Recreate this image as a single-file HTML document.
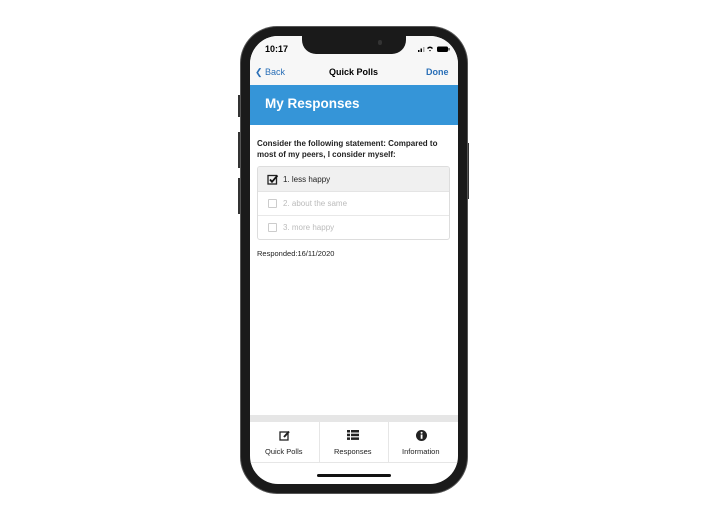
<!DOCTYPE html>
<html><head><style>
*{margin:0;padding:0;box-sizing:border-box}
body{width:708px;height:523px;background:#fff;position:relative;font-family:"Liberation Sans",sans-serif;overflow:hidden}
.a{position:absolute}
.phone{left:241px;top:27px;width:226px;height:466px;background:#1a1a1a;border-radius:36px;box-shadow:0 0 0 1px #555}
.screen{left:250px;top:36px;width:208px;height:448px;background:#fff;border-radius:28px;overflow:hidden}
.notch{left:302px;top:35px;width:104px;height:19px;background:#1a1a1a;border-radius:0 0 14px 14px}
.t{font-size:8px;color:#222}
</style></head><body>
<div class="a" style="left:238px;top:95px;width:4px;height:22px;background:#333"></div>
<div class="a" style="left:238px;top:132px;width:4px;height:36px;background:#333"></div>
<div class="a" style="left:238px;top:178px;width:4px;height:36px;background:#333"></div>
<div class="a" style="left:466px;top:143px;width:3px;height:56px;background:#333"></div>
<div class="a phone"></div>
<div class="a screen">
  <div class="a" style="left:0;top:0;width:208px;height:49px;background:#f7f7f7"></div>
  <div class="a" style="left:15px;top:8px;font-size:9px;font-weight:bold;color:#000">10:17</div>
  <svg class="a" style="left:168px;top:9px" width="32" height="8" viewBox="0 0 32 8"><g fill="#000"><rect x="0" y="5" width="1.5" height="2"/><rect x="2.5" y="3.5" width="1.5" height="3.5"/><rect x="5" y="2" width="1.5" height="5" fill="#aaa"/><path d="M9 3 Q12 0 15 3 L14 4 Q12 2 10 4Z"/><path d="M11 5 L12 6.5 L13 5Z"/><rect x="19" y="1.5" width="11" height="5.5" rx="1.5"/><rect x="30.5" y="3" width="1" height="2.5"/></g></svg>
  <div class="a" style="left:5px;top:31px;font-size:9px;color:#2a6fb7">&#10094; Back</div>
  <div class="a" style="left:79px;top:31px;font-size:9px;font-weight:bold;color:#000">Quick Polls</div>
  <div class="a" style="left:176px;top:31px;font-size:9px;font-weight:bold;color:#2a6fb7">Done</div>
  <div class="a" style="left:0;top:49px;width:208px;height:40px;background:#3595d8"></div>
  <div class="a" style="left:15px;top:60px;font-size:13.5px;font-weight:bold;color:#fff">My Responses</div>
  <div class="a" style="left:7px;top:102px;width:196px;font-size:8px;font-weight:bold;color:#222;line-height:11px">Consider the following statement: Compared to most of my peers, I consider myself:</div>
  <div class="a" style="left:7px;top:130px;width:193px;height:74px;border:1px solid #ddd;border-radius:3px;overflow:hidden">
    <div class="a" style="left:0;top:0;width:193px;height:25px;background:#f0f0f0;border-bottom:1px solid #e4e4e4"></div>
    <div class="a" style="left:0;top:48px;width:193px;height:1px;background:#e8e8e8"></div>
    <svg class="a" style="left:9px;top:7px" width="12" height="11" viewBox="0 0 12 11"><rect x="1" y="1.5" width="8.5" height="8.5" fill="none" stroke="#222" stroke-width="1.3"/><path d="M3 5.5 L5 7.8 L10.5 1.5" fill="none" stroke="#111" stroke-width="1.8"/></svg>
    <div class="a t" style="left:25px;top:8px">1. less happy</div>
    <div class="a" style="left:10px;top:32px;width:9px;height:9px;border:1px solid #ccc;border-radius:1px"></div>
    <div class="a t" style="left:25px;top:32px;color:#bbb">2. about the same</div>
    <div class="a" style="left:10px;top:56px;width:9px;height:9px;border:1px solid #ccc;border-radius:1px"></div>
    <div class="a t" style="left:25px;top:56px;color:#bbb">3. more happy</div>
  </div>
  <div class="a t" style="left:7px;top:213px;font-size:7.5px">Responded:16/11/2020</div>
  <div class="a" style="left:0;top:379px;width:208px;height:7px;background:#e6e6e6"></div>
  <div class="a" style="left:69px;top:386px;width:1px;height:40px;background:#e6e6e6"></div>
  <div class="a" style="left:138px;top:386px;width:1px;height:40px;background:#e6e6e6"></div>
  <div class="a" style="left:0;top:426px;width:208px;height:1px;background:#e6e6e6"></div>
  <svg class="a" style="left:29px;top:394px" width="12" height="11" viewBox="0 0 12 11"><rect x="1" y="2" width="8" height="8" fill="none" stroke="#222" stroke-width="1.3"/><path d="M5 7 L10 1.5" stroke="#222" stroke-width="2"/></svg>
  <div class="a t" style="left:15px;top:411px;font-size:7.5px">Quick Polls</div>
  <svg class="a" style="left:97px;top:394px" width="12" height="10" viewBox="0 0 12 10"><g fill="#222"><rect x="0" y="0" width="3" height="2.5"/><rect x="4" y="0" width="8" height="2.5"/><rect x="0" y="3.7" width="3" height="2.5"/><rect x="4" y="3.7" width="8" height="2.5"/><rect x="0" y="7.4" width="3" height="2.5"/><rect x="4" y="7.4" width="8" height="2.5"/></g></svg>
  <div class="a t" style="left:84px;top:411px;font-size:7.5px">Responses</div>
  <svg class="a" style="left:166px;top:394px" width="11" height="11" viewBox="0 0 11 11"><circle cx="5.5" cy="5.5" r="5.5" fill="#222"/><rect x="4.7" y="4.5" width="1.8" height="4.3" fill="#fff"/><circle cx="5.6" cy="2.8" r="1" fill="#fff"/></svg>
  <div class="a t" style="left:152px;top:411px;font-size:7.5px">Information</div>
  <div class="a" style="left:67px;top:438px;width:74px;height:3px;background:#111;border-radius:2px"></div>
</div>
<div class="a notch"></div>
<div class="a" style="left:378px;top:40px;width:4px;height:5px;border-radius:2px;background:#333"></div>
</body></html>
